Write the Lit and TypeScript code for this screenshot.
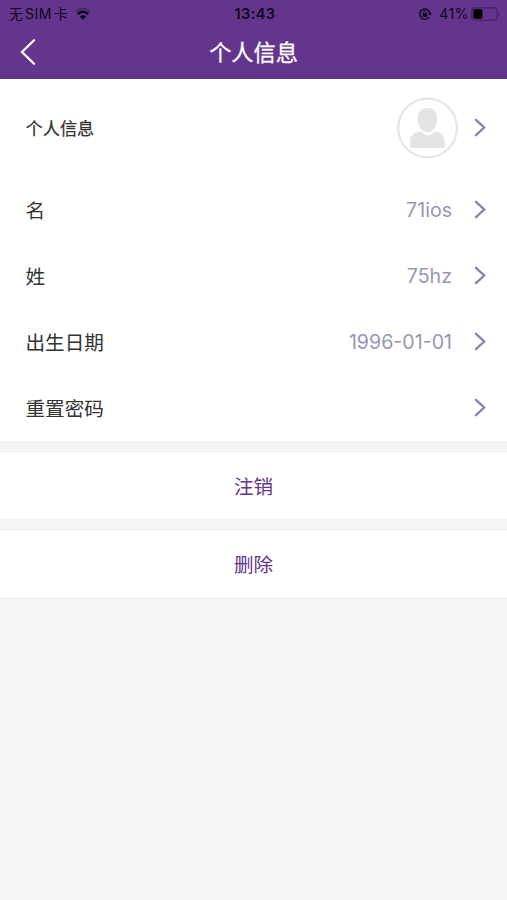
import { LitElement, html, css, svg } from "lit";
import { customElement, property } from "lit/decorators.js";

@customElement("status-bar")
class StatusBar extends LitElement {
  static styles = css`
    :host {
      display: grid;
      grid-template-columns: 1fr auto 1fr;
      align-items: center;
      height: 27px;
      padding: 0 6px 0 9px;
      color: #100620;
      font-size: 14px;
      line-height: 27px;
      white-space: nowrap;
    }
    svg { display: block; }
    .side { display: flex; align-items: center; }
    .right { justify-content: flex-end; }
    .sim { letter-spacing: 0.9px; }
    .sim b { font-weight: 400; letter-spacing: 0.5px; margin: 0 2px 0 1px; }
    .wifi { margin-left: 6px; }
    .time { font-weight: 600; font-size: 14.5px; letter-spacing: 0.45px; }
    .pct { margin: 0 2px 0 7px; font-size: 14px; letter-spacing: 0.5px; }
  `;
  render() {
    return html`
      <div class="side">
        <span class="sim">无<b>SIM</b>卡</span>
        <svg class="wifi" width="16" height="13" viewBox="0 0 16 13">
          <path d="M1 4.6Q8-1.6 15 4.6" fill="none" stroke="#100620" stroke-opacity=".3" stroke-width="1.8" />
          <path d="M2.8 7Q8 2.6 13.2 7" fill="none" stroke="#050010" stroke-width="2.4" />
          <path d="M4.9 9.5Q8 6.9 11.1 9.5L8 12.4Z" fill="#050010" />
        </svg>
      </div>
      <span class="time">13:43</span>
      <div class="side right">
        <svg width="14" height="14" viewBox="0 0 14 14">
          <path d="M11.2 10.2A5.2 5.2 0 1 1 12.1 6.3" fill="none" stroke="#100620" stroke-width="1.4" />
          <path d="M10 6h4l-2 3z" fill="#100620" />
          <rect x="4.5" y="6.2" width="4.8" height="3.7" rx=".6" fill="#100620" />
          <path d="M5.5 6.5V5.4a1.4 1.4 0 0 1 2.8 0v1.1" fill="none" stroke="#100620" stroke-width="1" />
        </svg>
        <span class="pct">41%</span>
        <svg width="30" height="14" viewBox="0 0 30 14">
          <rect x=".8" y=".8" width="25.4" height="12.4" rx="3.4" fill="none" stroke="#100620" stroke-opacity=".38" stroke-width="1.2" />
          <rect x="2.3" y="2.3" width="9.2" height="9.4" rx="1.6" fill="#020004" />
          <path d="M27.5 5q2 2 0 4z" fill="#100620" fill-opacity=".45" />
        </svg>
      </div>
    `;
  }
}

@customElement("info-row")
class InfoRow extends LitElement {
  @property() label = "";
  @property() value = "";
  static styles = css`
    :host {
      display: flex;
      align-items: center;
      height: 66px;
      padding: 0 21px 0 25.5px;
      font-size: 19.6px;
      color: #333;
    }
    .label { flex: 1; padding-bottom: 2px; }
    .value {
      font-family: Inter, "Noto Sans CJK SC", sans-serif;
      font-size: 19.6px;
      color: #9796b8;
    }
    svg { display: block; margin-left: 22px; }
  `;
  render() {
    return html`
      <span class="label">${this.label}</span>
      <span class="value">${this.value}</span>
      <slot></slot>
      <svg width="12" height="20" viewBox="0 0 12 20">
        <path d="M2 1.8L10.2 9.5L2 17.2" fill="none" stroke="#8786b0" stroke-width="2.4" stroke-linecap="round" stroke-linejoin="miter" />
      </svg>
    `;
  }
}

const avatar = svg`
  <circle cx="30.6" cy="31" r="29.3" fill="#fff" stroke="#e6e6e6" stroke-width="2.3" />
  <path d="M13.2 51V43.5Q13.2 35.4 24 34.6Q31 42 37.5 34.6Q47.6 35.4 47.6 43.5V51Z" fill="#e4e4e4" />
  <path d="M30.4 10.2C37 10.2 41 14.5 41 21.5C41 30 36.6 35.8 30.4 35.8S19.8 30 19.8 21.5C19.8 14.5 23.8 10.2 30.4 10.2Z" fill="#e4e4e4" stroke="#fff" stroke-width="1.4" />
`;

@customElement("app-root")
class AppRoot extends LitElement {
  static styles = css`
    :host {
      display: block;
      min-height: 900px;
      background: #f4f4f7;
      font-family: Inter, "Noto Sans CJK SC", sans-serif;
    }
    svg { display: block; }
    header { height: 79px; background: #64358c; }
    .nav {
      display: grid;
      grid-template-columns: 60px 1fr 60px;
      align-items: center;
      height: 50px;
      color: #fff;
    }
    .back { margin-left: 20px; }
    h1 {
      margin: 0;
      padding-top: 2px;
      text-align: center;
      font-size: 22.2px;
      line-height: 30px;
      font-weight: 400;
      -webkit-text-stroke: 0.3px #fff;
    }
    .list { background: #fff; }
    .profile {
      height: 98px;
      font-size: 17.2px;
      -webkit-text-stroke: 0.25px #333;
    }
    .avatar { margin-right: -7px; }
    .action {
      display: flex;
      align-items: center;
      justify-content: center;
      box-sizing: border-box;
      height: 66px;
      margin-top: 12px;
      padding-bottom: 2px;
      background: #fff;
      color: #64358c;
      font-size: 19.6px;
    }
  `;
  render() {
    return html`
      <header>
        <status-bar></status-bar>
        <div class="nav">
          <svg class="back" width="16" height="28" viewBox="0 0 16 28">
            <path d="M14 2.2L2 14L14 25.8" fill="none" stroke="#fff" stroke-width="2.3" stroke-linecap="round" />
          </svg>
          <h1>个人信息</h1>
        </div>
      </header>
      <div class="list">
        <info-row class="profile" label="个人信息">
          <svg class="avatar" width="62" height="62" viewBox="0 0 62 62">${avatar}</svg>
        </info-row>
        <info-row label="名" value="71ios"></info-row>
        <info-row label="姓" value="75hz"></info-row>
        <info-row label="出生日期" value="1996-01-01"></info-row>
        <info-row label="重置密码"></info-row>
      </div>
      <div class="action">注销</div>
      <div class="action">删除</div>
    `;
  }
}
